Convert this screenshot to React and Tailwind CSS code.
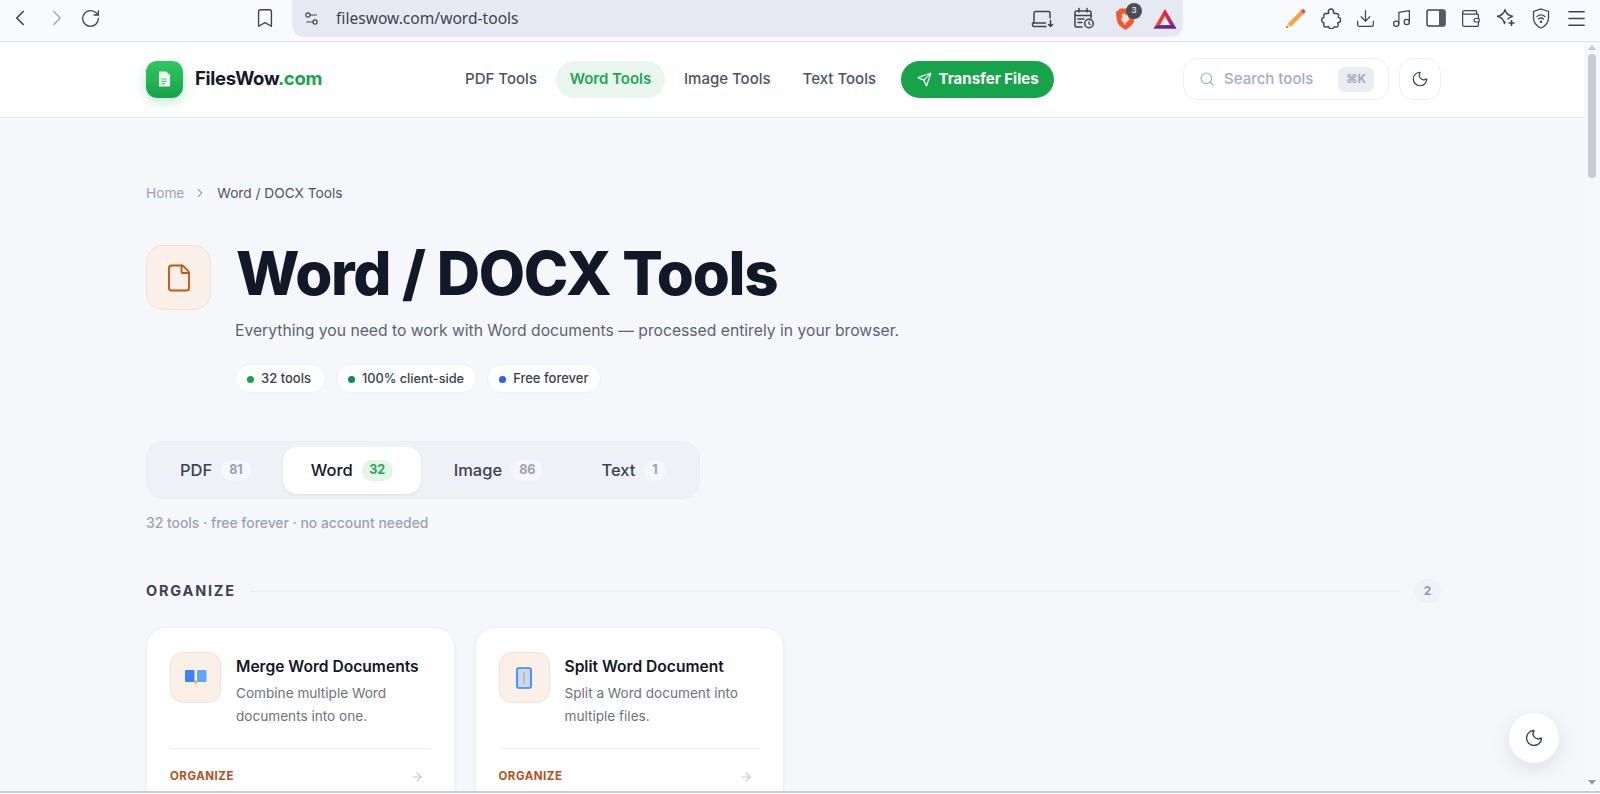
import {
  ArrowRight, Bookmark, ChevronLeft, ChevronRight, Download, File, Menu, Moon, Music,
  RotateCw, Search, Send, Settings2, Wallet,
} from 'lucide-react'

const tabs = [
  { name: 'PDF', count: 81, cls: 'pl-[27px] pr-[32px]' },
  { name: 'Word', count: 32, active: true },
  { name: 'Image', count: 86, cls: 'pl-[33px] pr-[28px]' },
  { name: 'Text', count: 1, cls: 'pl-[30px] pr-[20px]' },
]

function LaptopDown() {
  return (
    <svg width="23" height="20" viewBox="0 0 23 20" fill="none" stroke="#3f4450" strokeWidth="1.5" strokeLinecap="round" strokeLinejoin="round">
      <path d="M3 14V4a1.5 1.5 0 0 1 1.5-1.5h13A1.5 1.5 0 0 1 19 4v5" />
      <path d="M1.5 14v2a1.5 1.5 0 0 0 1.5 1.5h12M1.5 14h13" />
      <path d="M19.5 11.5v5.5M17.5 15.5l2 2 2-2" />
    </svg>
  )
}

function CalendarIcon() {
  return (
    <svg width="22" height="23" viewBox="0 0 22 23" fill="none" stroke="#3f4450" strokeWidth="1.5" strokeLinecap="round">
      <path d="M9 20H3.500A1.500 1.500 0 0 1 2 18.500V5.500A1.500 1.500 0 0 1 3.500 4h13A1.500 1.500 0 0 1 18 5.500V11" />
      <path d="M2 8.500h16M6 1.500V5M14 1.500V5M5 12h6M5 15.500h4" />
      <circle cx="16" cy="16.500" r="4.300" />
      <path d="M16 14.500v2.200l1.500.8" strokeWidth="1.200" />
    </svg>
  )
}

function BraveIcon() {
  return (
    <div className="relative h-[24px] w-[21px]">
      <svg width="21" height="24" viewBox="0 0 22 24">
        <path d="M5 1h12l2 2.500 2 .5-.8 8.500c-.4 3.500-2.200 5.800-4.700 7.800L11 23.500 6.500 20.300C4 18.300 2.200 16 1.800 12.500L1 4l2-.5z" fill="#f1582a" />
        <path d="M7 7l3-1 1 2 2-2 2.500 1.500-1.500 3 1.500 2-3.500 3-1.500 3-2-3-2.500-3 1.500-2z" fill="#fff" opacity=".8" />
      </svg>
      <div className="absolute left-[11px] top-[-4px] flex h-[16px] w-[16px] items-center justify-center rounded-full bg-[#4b4d52] font-['Liberation_Sans',sans-serif] text-[9px] text-white">3</div>
    </div>
  )
}

function TriangleIcon() {
  return (
    <svg width="24" height="21" viewBox="0 0 24 21">
      <defs>
        <linearGradient id="tri" x1="0" y1="0" x2="1" y2="0">
          <stop offset="0" stopColor="#ff5a1f" />
          <stop offset=".55" stopColor="#e0243f" />
          <stop offset="1" stopColor="#7b2aa0" />
        </linearGradient>
      </defs>
      <path d="M12 1l11.500 19.500H.5z" fill="url(#tri)" />
      <path d="M12 8l5 9h-10z" fill="#f3eef6" />
      <path d="M.5 20.500l3.200-3h16.600l3.200 3z" fill="#5b2a9a" />
    </svg>
  )
}

function PencilIcon() {
  return (
    <svg width="22" height="21" viewBox="0 0 22 21">
      <path d="M16.500 3l3 3L7 18.500l-3-3z" fill="#f9a13a" />
      <path d="M16.500 3l1.500-1.500a1.500 1.500 0 0 1 2 0l1 1a1.500 1.500 0 0 1 0 2L19.500 6z" fill="#f0447a" />
      <path d="M4 15.500l3 3-5 1.500z" fill="#f7c98a" />
      <path d="M2.800 18l1.200 1.200-2 .8z" fill="#333" />
    </svg>
  )
}

function PuzzleIcon() {
  return (
    <svg width="21" height="21" viewBox="0 0 21 21" fill="none" stroke="#3f4450" strokeWidth="1.400" strokeLinejoin="round">
      <path d="M7.500 4.500C6.800 2.600 8.400 1 10 1s3.200 1.600 2.500 3.500c-.3.800.2 1 1 1h2c1.400 0 2.500 1 2 2.500-.3.800-.2 1.300.5 1.500 2 .5 2.300 4.800-.5 5-1 .1-.8.700-.5 1.500.5 1.800-.5 3.500-2.200 3-1-.3-1.400-.6-1.800.3-1 2-4.500 1.800-5.300-.3-.3-.7-.8-.7-1.700-.2-2 .8-3.700-.5-3.200-2.600.3-.9.100-1.500-.7-1.700-2-.7-2-4.200.2-4.800.8-.2.900-.8.600-1.500-.5-1.500.5-2.700 2-2.700h1.500c.9 0 1.700-.2 1.300-1z" />
    </svg>
  )
}

function SidePanelIcon() {
  return (
    <svg width="20" height="18" viewBox="0 0 20 18">
      <rect x="1" y="1" width="18" height="16" rx="2" fill="none" stroke="#3f4450" strokeWidth="1.500" />
      <rect x="13" y="1" width="6" height="16" fill="#555a66" />
    </svg>
  )
}

function SparkIcon() {
  return (
    <svg width="20" height="20" viewBox="0 0 20 20" fill="none" stroke="#3f4450" strokeWidth="1.400" strokeLinejoin="round">
      <path d="M9 1.500c.8 4 2.500 5.800 7.500 6.800-2.800.8-4 1.500-4.800 3.200M9 1.500C8.200 5.500 6.500 7.300 1.500 8.300c4 1 6 2.700 7 7.200.2-.8.400-1.500.7-2.200" />
      <path d="M15.500 12v6M12.500 15h6" strokeWidth="1.600" />
    </svg>
  )
}

function ShieldWifiIcon() {
  return (
    <svg width="18" height="21" viewBox="0 0 18 21" fill="none" stroke="#3f4450" strokeWidth="1.300" strokeLinecap="round">
      <path d="M9 1l7.500 2.500v6.500c0 4.500-3 8-7.500 10C4.500 18 1.500 14.500 1.500 10V3.500z" />
      <path d="M5 8.500c2.400-2 5.600-2 8 0M6.500 11c1.500-1.200 3.500-1.200 5 0" />
      <circle cx="9" cy="13.800" r=".6" fill="#3f4450" />
    </svg>
  )
}

function BrowserBar() {
  return (
    <div className="flex h-[42px] shrink-0 items-start border-b border-[#dfe1e8] bg-[#f9fafe] text-[#3f4450]">
      <div className="flex h-[36px] w-[292px] items-center pl-[7px]">
        <ChevronLeft size={26} strokeWidth={1.5} />
        <ChevronRight size={26} strokeWidth={1.5} className="ml-[11px] text-[#a9acb5]" />
        <RotateCw size={21} strokeWidth={1.5} className="ml-[10px]" />
        <Bookmark size={22} strokeWidth={1.5} className="ml-[153px]" />
      </div>
      <div className="flex h-[37px] w-[891px] items-center rounded-b-[12px] bg-[#e6e9f4] pl-[11px] pr-[6px]">
        <Settings2 size={17} strokeWidth={1.6} />
        <span className="ml-[16px] font-['Noto_Sans',sans-serif] text-[15.6px] text-[#40444e]">fileswow.com/word-tools</span>
        <div className="ml-auto flex items-center">
          <LaptopDown />
          <div className="ml-[19px]"><CalendarIcon /></div>
          <div className="ml-[20px]"><BraveIcon /></div>
          <div className="ml-[17px]"><TriangleIcon /></div>
        </div>
      </div>
      <div className="flex h-[36px] flex-1 items-center justify-end pr-[12px]">
        <PencilIcon />
        <div className="ml-[15px]"><PuzzleIcon /></div>
        <Download size={21} strokeWidth={1.4} className="ml-[13px]" />
        <Music size={21} strokeWidth={1.4} className="ml-[15px]" />
        <div className="ml-[14px]"><SidePanelIcon /></div>
        <Wallet size={21} strokeWidth={1.4} className="ml-[14px]" />
        <div className="ml-[15px]"><SparkIcon /></div>
        <div className="ml-[16px]"><ShieldWifiIcon /></div>
        <Menu size={23} strokeWidth={1.4} className="ml-[15px]" />
      </div>
    </div>
  )
}

function SiteHeader() {
  return (
    <header className="flex h-[76px] shrink-0 items-center border-b border-[#e5e8ee] bg-white pb-[1px] pl-[146px] pr-[143px]">
      <div className="flex h-[37px] w-[37px] items-center justify-center rounded-[11px] bg-gradient-to-b from-[#2fc862] to-[#16a34a] shadow-[0_4px_12px_rgba(22,163,74,0.25)]">
        <svg width="13" height="16" viewBox="0 0 14 16">
          <path d="M1 0h8l4 4v11a1 1 0 0 1-1 1H1z" fill="#f1fbf4" />
          <path d="M3.500 8h6M3.500 10.500h6M3.500 13h4" stroke="#4cc879" strokeWidth="1.200" />
        </svg>
      </div>
      <div className="ml-[12px] text-[18.5px] font-bold tracking-[-0.3px] text-[#111827]">FilesWow<span className="text-[#16a34a]">.com</span></div>
      <nav className="ml-[143px] flex items-center text-[15px] font-medium text-[#4b5563]">
        <span>PDF Tools</span>
        <span className="ml-[19px] flex h-[37px] w-[109px] items-center justify-center rounded-full bg-[#e8f6ed] font-semibold text-[#22a755]">Word Tools</span>
        <span className="ml-[19px]">Image Tools</span>
        <span className="ml-[32px]">Text Tools</span>
        <span className="ml-[25px] flex h-[37px] w-[153px] items-center justify-center gap-[7px] rounded-full bg-[#16a34a] font-bold text-white">
          <Send size={15} strokeWidth={2} />
          Transfer Files
        </span>
      </nav>
      <div className="ml-auto flex h-[42px] w-[206px] items-center rounded-[14px] border border-[#eef0f4] bg-white pl-[15px] pr-[14px] text-[15px] font-medium text-[#a3adc2]">
        <Search size={16} strokeWidth={1.7} />
        <span className="ml-[9px]">Search tools</span>
        <span className="ml-auto flex h-[25px] w-[36px] items-center justify-center rounded-[7px] bg-[#e9edf3] text-[12px] font-bold">⌘K</span>
      </div>
      <div className="ml-[10px] flex h-[42px] w-[42px] items-center justify-center rounded-[14px] border border-[#eef0f4] bg-white text-[#374151]">
        <Moon size={18} strokeWidth={1.6} />
      </div>
    </header>
  )
}

function Pill({ dot, label, className }) {
  return (
    <span className={`flex h-[29px] items-center gap-[7px] rounded-full border border-[#eef0f4] bg-white pl-[11px] pt-[1px] ${className}`}>
      <span className={`h-[7px] w-[7px] rounded-full ${dot}`} />
      {label}
    </span>
  )
}

function Hero() {
  return (
    <section>
      <div className="flex items-center text-[13.7px] leading-[20px]">
        <span className="text-[#9aa3b5]">Home</span>
        <ChevronRight size={14} className="ml-[9px] text-[#9aa3b5]" />
        <span className="ml-[10px] text-[#4b5563]">Word / DOCX Tools</span>
      </div>
      <div className="mt-[42px] flex">
        <div className="flex h-[65px] w-[65px] shrink-0 items-center justify-center rounded-[17px] border border-[#f5dfd0] bg-[#fbf0e8]">
          <File size={30} strokeWidth={1.5} className="text-[#c2571a]" />
        </div>
        <div className="ml-[25px]">
          <h1 className="mt-[-7px] text-[60px] font-extrabold leading-[70px] tracking-[-1.3px] text-[#111827]">Word / DOCX Tools</h1>
          <p className="ml-[-1px] mt-[11px] text-[15.7px] leading-[24px] text-[#5b6472]">Everything you need to work with Word documents — processed entirely in your browser.</p>
          <div className="ml-[-1px] mt-[21px] flex gap-[10px] text-[13px] font-medium text-[#374151]">
            <Pill dot="bg-[#16a34a]" label="32 tools" className="pr-[14px]" />
            <Pill dot="bg-[#0f8a5f]" label="100% client-side" className="pr-[12px] text-[12.75px]" />
            <Pill dot="bg-[#2563eb]" label="Free forever" className="pr-[12px]" />
          </div>
        </div>
      </div>
    </section>
  )
}

function CategoryTabs() {
  return (
    <div className="mt-[48px] flex h-[58px] w-[554px] items-center rounded-[18px] border border-[#e9edf3] bg-[#eef1f6] px-[6px] text-[16.5px] font-medium text-[#3b4453]">
      {tabs.map((t) => (
        <div
          key={t.name}
          className={
            t.active
              ? 'flex h-[47px] items-center rounded-[14px] bg-white pl-[28px] pr-[28px] text-[#111827] shadow-[0_1px_3px_rgba(15,23,42,0.08)]'
              : `flex h-[47px] items-center ${t.cls}`
          }
        >
          {t.name}
          <span
            className={
              t.active
                ? 'ml-[9px] flex h-[21px] min-w-[31px] items-center justify-center rounded-full bg-[#e3f4e9] px-[6px] text-[12.5px] font-bold text-[#22a755]'
                : 'ml-[9px] flex h-[21px] min-w-[21px] items-center justify-center rounded-full bg-[#f5f7fa] px-[8px] text-[12.5px] font-bold text-[#97a1b6]'
            }
          >
            {t.count}
          </span>
        </div>
      ))}
    </div>
  )
}

function ToolCard({ title, lines, icon }) {
  return (
    <div className="h-[200px] w-[309px] rounded-[20px] border border-[#eef0f4] bg-white pl-[23px] pr-[24px] pt-[24px] shadow-[0_1px_4px_rgba(15,23,42,0.03)]">
      <div className="flex h-[76px] gap-[15px]">
        <div className="flex h-[51px] w-[51px] shrink-0 items-center justify-center rounded-[13px] border border-[#f5dfd0] bg-[#fbf0e8]">{icon}</div>
        <div>
          <div className="mt-[1px] text-[15.6px] font-semibold leading-[28px] text-[#111827]">{title}</div>
          <div className="mt-[1px] text-[13.6px] leading-[22.5px] text-[#6b7280]">
            {lines[0]}<br />{lines[1]}
          </div>
        </div>
      </div>
      <div className="mt-[20px] flex items-center justify-between border-t border-[#eceef2] pt-[19px] pr-[6px]">
        <span className="text-[11.5px] font-bold tracking-[0.5px] text-[#b0531c]">ORGANIZE</span>
        <ArrowRight size={14} className="text-[#c3c8d0]" />
      </div>
    </div>
  )
}

function MergeIcon() {
  return (
    <svg width="22" height="18" viewBox="0 0 22 18">
      <rect x="0" y="1" width="9.500" height="12" rx="1" fill="#3b82f6" />
      <rect x="12" y="1" width="9.500" height="12" rx="1" fill="#60a5fa" />
      <path d="M10.800 11v4M9 13h3.600" stroke="#f59e0b" strokeWidth="1" />
    </svg>
  )
}

function SplitIcon() {
  return (
    <svg width="16" height="22" viewBox="0 0 16 22">
      <rect x="1" y="1" width="14" height="20" rx="1.500" fill="#bfdbfe" stroke="#3b82f6" strokeWidth="1.700" />
      <path d="M8 5v12" stroke="#f4a261" strokeWidth="1.500" />
    </svg>
  )
}

export default function App() {
  return (
    <div className="relative flex h-[794px] w-[1600px] flex-col overflow-hidden bg-[#f5f7fb] font-['Inter',sans-serif]">
      <BrowserBar />
      <div className="flex min-h-0 flex-1">
        <div className="min-w-0 flex-1 overflow-hidden">
          <SiteHeader />
          <main className="pl-[146px] pr-[143px] pt-[65px]">
            <Hero />
            <CategoryTabs />
            <p className="mt-[14px] text-[13.9px] font-medium leading-[20px] text-[#9aa3b5]">32 tools · free forever · no account needed</p>
            <div className="mt-[46px] flex items-center">
              <h2 className="text-[14.5px] font-bold tracking-[1.8px] text-[#3b4453]">ORGANIZE</h2>
              <div className="ml-[14px] h-px flex-1 bg-[#e9ecf1]" />
              <span className="ml-[13px] flex h-[24px] w-[27px] items-center justify-center rounded-full bg-[#eef1f6] text-[12px] font-bold text-[#8f9ab2]">2</span>
            </div>
            <div className="mt-[24px] flex gap-[19.5px]">
              <ToolCard title="Merge Word Documents" lines={['Combine multiple Word', 'documents into one.']} icon={<MergeIcon />} />
              <ToolCard title="Split Word Document" lines={['Split a Word document into', 'multiple files.']} icon={<SplitIcon />} />
            </div>
          </main>
        </div>
        <div className="flex w-[16px] shrink-0 flex-col items-center bg-[#f7f8fb] pt-[3px]">
          <div className="h-0 w-0 border-x-[4px] border-b-[5px] border-x-transparent border-b-[#c4c7ce]" />
          <div className="mt-[4px] h-[124px] w-[8px] rounded-full bg-[#c9ccd3]" />
          <div className="mt-auto mb-[6px] h-0 w-0 border-x-[4px] border-t-[5px] border-x-transparent border-t-[#9a9da5]" />
        </div>
      </div>
      <div className="h-[3px] shrink-0 border-t-2 border-[#c9cbd0] bg-white" />
      <div className="absolute left-[1509px] top-[713px] flex h-[50px] w-[50px] items-center justify-center rounded-full bg-white text-[#374151] shadow-[0_6px_20px_rgba(15,23,42,0.1)]">
        <Moon size={20} strokeWidth={1.6} />
      </div>
    </div>
  )
}
